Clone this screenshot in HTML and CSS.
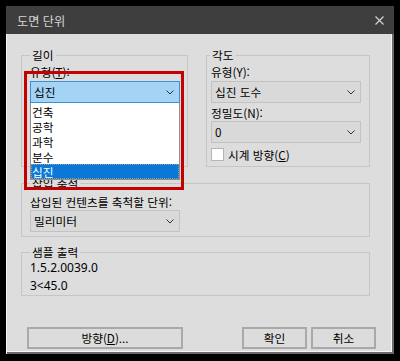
FILE: index.html
```html
<!DOCTYPE html>
<html lang="ko">
<head>
<meta charset="utf-8">
<title>도면 단위</title>
<link rel="stylesheet" href="styles.css">
</head>
<body>
<div class="window">
  <div class="titlebar">
    <span class="title">도면 단위</span>
    <svg class="close" width="9" height="9" viewBox="0 0 9 9"><path d="M0.5 0.5 L8.5 8.5 M8.5 0.5 L0.5 8.5" stroke="#d6d6d6" stroke-width="1.1" fill="none"/></svg>
  </div>
  <div class="body">
    <div class="row">
      <div class="group g-len">
        <div class="legend">길이</div>
        <div class="label first">유형(<u>T</u>):</div>
        <div class="combo combo-open">
          <span>십진</span>
          <svg class="chev" width="8" height="5" viewBox="0 0 8 5"><path d="M0.5 0.5 L4 4 L7.5 0.5" fill="none" stroke="#333" stroke-width="1"/></svg>
          <div class="droplist">
            <div class="opt">건축</div>
            <div class="opt">공학</div>
            <div class="opt">과학</div>
            <div class="opt">분수</div>
            <div class="opt sel">십진</div>
          </div>
          <div class="annot"></div>
        </div>
      </div>
      <div class="group g-ang">
        <div class="legend">각도</div>
        <div class="label first">유형(Y):</div>
        <div class="combo">
          <span>십진 도수</span>
          <svg class="chev" width="8" height="5" viewBox="0 0 8 5"><path d="M0.5 0.5 L4 4 L7.5 0.5" fill="none" stroke="#333" stroke-width="1"/></svg>
        </div>
        <div class="label second">정밀도(N):</div>
        <div class="combo">
          <span>0</span>
          <svg class="chev" width="8" height="5" viewBox="0 0 8 5"><path d="M0.5 0.5 L4 4 L7.5 0.5" fill="none" stroke="#333" stroke-width="1"/></svg>
        </div>
        <div class="checkrow">
          <span class="check"></span>
          <span>시계 방향(<u>C</u>)</span>
        </div>
      </div>
    </div>
    <div class="group g-scale">
      <div class="legend">삽입 축척</div>
      <div class="label scale-label">삽입된 컨텐츠를 축척할 단위:</div>
      <div class="combo">
        <span>밀리미터</span>
        <svg class="chev" width="8" height="5" viewBox="0 0 8 5"><path d="M0.5 0.5 L4 4 L7.5 0.5" fill="none" stroke="#333" stroke-width="1"/></svg>
      </div>
    </div>
    <div class="group g-sample">
      <div class="legend">샘플 출력</div>
      <div class="line first">1.5.2.0039.0</div>
      <div class="line">3&lt;45.0</div>
    </div>
    <div class="buttons">
      <div class="btn btn-dir">방향(<u>D</u>)...</div>
      <div class="spacer"></div>
      <div class="btn btn-small">확인</div>
      <div class="btn btn-small">취소</div>
    </div>
  </div>
</div>
</body>
</html>
```
FILE: styles.css
```css
html, body {
  margin: 0;
  padding: 0;
  background: #000;
}
body {
  font-family: "Noto Sans CJK KR", "Noto Sans", sans-serif;
  font-size: 11.7px;
  color: #000;
}
.window {
  margin: 6px 0 0 6px;
  width: 388px;
  height: 348px;
  display: flex;
  flex-direction: column;
}
.titlebar {
  height: 28px;
  flex: none;
  background: #3e3e3e;
  display: flex;
  align-items: center;
  justify-content: space-between;
  padding: 0 10px 0 11px;
  color: #d8d8d8;
  font-size: 12.2px;
}
.title {
  line-height: 28px;
  padding-top: 2px;
}
.close {
  display: block;
  margin-top: 1px;
}
.body {
  flex: 1;
  background: #dddddd;
  box-shadow: inset 1px 0 #f6f6f6, inset -2px -2px #6a6a6a, inset -3px -3px #f6f6f6;
  padding: 21px 24px 0 15px;
}
.row {
  display: flex;
  gap: 18px;
}
.group {
  border: 1px solid #c6c6c6;
  box-sizing: border-box;
}
.legend {
  width: fit-content;
  margin-top: -9px;
  padding: 0 2px;
  line-height: 16px;
  background: #dddddd;
}
.g-len {
  width: 167px;
  padding: 0 0 0 8px;
}
.g-ang {
  width: 164px;
  padding: 0 0 3px 4px;
}
.g-ang .legend {
  margin-left: -1px;
}
.label {
  line-height: 16px;
}
.label.first {
  margin-top: 1px;
}
.label.second {
  margin-top: 2px;
}
.label.first + .combo {
  margin-top: 1px;
}
.combo {
  position: relative;
  width: 150px;
  height: 22px;
  box-sizing: border-box;
  border: 1px solid #c3c3c3;
  background: #d9d9d9;
  display: flex;
  align-items: center;
  justify-content: space-between;
  padding: 0 5px 0 3px;
  line-height: 16px;
}
.chev {
  display: block;
}
.combo-open {
  background: #a3d3f5;
  border-color: #3d8fd6;
  z-index: 2;
}
.droplist {
  position: absolute;
  left: -1px;
  top: 21px;
  width: 150px;
  box-sizing: border-box;
  background: #fff;
  border: 1px solid #8e8e8e;
  border-top: none;
  padding-top: 1px;
}
.opt {
  line-height: 15px;
  padding-left: 1px;
}
.opt.sel {
  background: #0a78d6;
  color: #fff;
  outline: 1px dotted #9a9a9a;
  outline-offset: -1px;
}
.annot {
  position: absolute;
  left: -7px;
  top: -11px;
  width: 160px;
  height: 119px;
  box-sizing: border-box;
  border: 3px solid #c40000;
  pointer-events: none;
}
.checkrow {
  margin-top: 2px;
  height: 18px;
  display: flex;
  align-items: center;
  gap: 4px;
}
.check {
  width: 13px;
  height: 13px;
  box-sizing: border-box;
  background: #fff;
  border: 1px solid #b5b5b5;
}
.g-scale {
  margin-top: 16px;
  padding: 0 0 4px 8px;
}
.scale-label {
  margin-top: 3px;
}
.g-sample {
  margin-top: 15px;
  padding: 0 0 0 8px;
}
.line {
  font-family: "Noto Sans", "Noto Sans CJK KR", sans-serif;
  font-size: 12px;
  line-height: 18px;
}
.line.first {
  margin-top: -1px;
}
.buttons {
  margin: 31px -6px 0 6px;
  display: flex;
  gap: 4px;
}
.spacer {
  flex: 1;
}
.btn {
  height: 22px;
  box-sizing: border-box;
  border: 2px solid #a9a9a9;
  background: #dcdcdc;
  display: flex;
  align-items: center;
  justify-content: center;
  line-height: 16px;
}
.btn-dir {
  width: 156px;
}
.btn-small {
  width: 65px;
}
```
